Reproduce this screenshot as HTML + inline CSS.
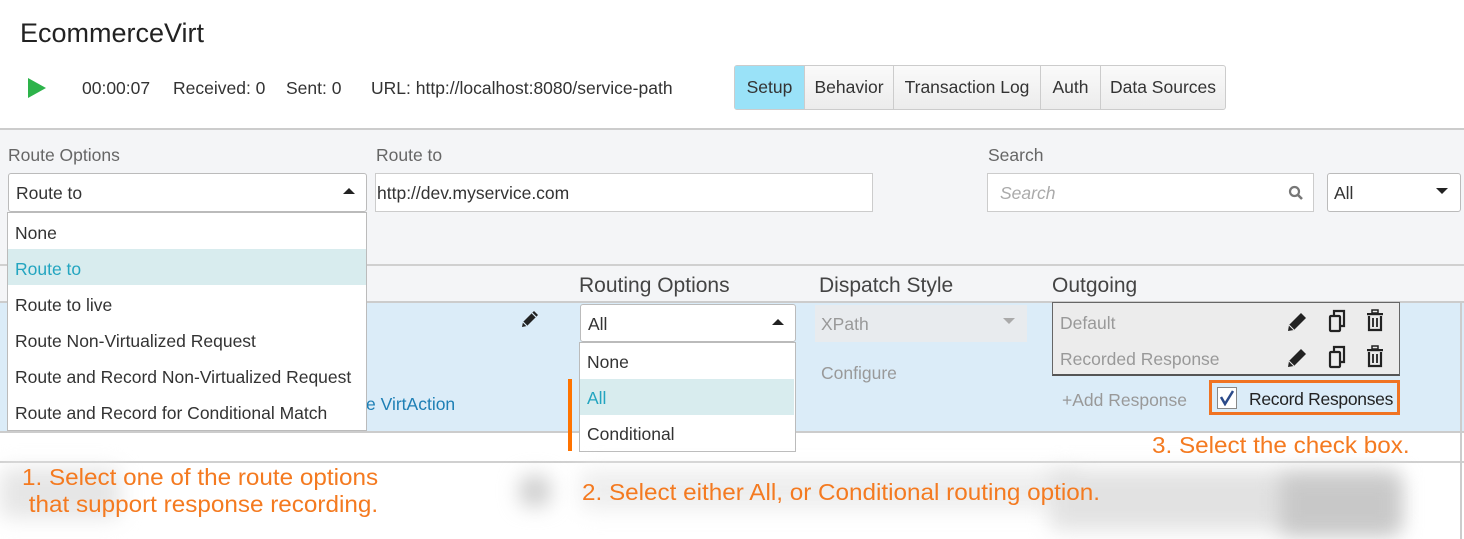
<!DOCTYPE html>
<html><head><meta charset="utf-8"><style>
*{box-sizing:border-box;margin:0;padding:0}
body{width:1464px;height:539px;overflow:hidden;background:#fff;font-family:"Liberation Sans",sans-serif;color:#333;position:relative}
.a{position:absolute;white-space:nowrap}
.f{font-size:17.5px}
.lbl{font-size:17.5px;color:#666}
.box{position:absolute;background:#fff;border:1px solid #ccc}
.or{color:#f47a20;font-size:23px;transform:scaleX(1.055);transform-origin:0 0}
.icon{position:absolute}
.blur{position:absolute;background:#ddd;filter:blur(10px);border-radius:8px}
</style></head><body>
<div class="a" style="left:20px;top:18px;font-size:27px;color:#222">EcommerceVirt</div>
<svg class="icon" style="left:27px;top:77px" width="20" height="22"><polygon points="1,1 19,11 1,21" fill="#2db34a"/></svg>
<div class="a f" style="left:82px;top:78px;color:#333">00:00:07</div>
<div class="a f" style="left:173px;top:78px">Received: 0</div>
<div class="a f" style="left:286px;top:78px">Sent: 0</div>
<div class="a f" style="left:371px;top:78px">URL: http://localhost:8080/service-path</div>
<div class="a" style="left:734px;top:65px;height:45px;border:1px solid #ccc;border-radius:3px;display:flex;background:linear-gradient(#fafafa,#ececec);font-size:17.5px">
<div style="width:70px;background:#9ae2f8;border-right:1px solid #ccc;line-height:43px;text-align:center">Setup</div>
<div style="width:89px;border-right:1px solid #ccc;line-height:43px;text-align:center">Behavior</div>
<div style="width:147px;border-right:1px solid #ccc;line-height:43px;text-align:center">Transaction Log</div>
<div style="width:60px;border-right:1px solid #ccc;line-height:43px;text-align:center">Auth</div>
<div style="width:124px;line-height:43px;text-align:center">Data Sources</div>
</div>
<div class="a" style="left:0;top:128px;width:1464px;height:138px;background:#f4f5f7;border-top:2px solid #ccc;border-bottom:2px solid #d0d0d0"></div>
<div class="a lbl" style="left:8px;top:145px">Route Options</div>
<div class="a lbl" style="left:376px;top:145px">Route to</div>
<div class="a lbl" style="left:988px;top:145px">Search</div>
<div class="box" style="left:8px;top:173px;width:359px;height:39px;border-radius:3px;border-color:#bbb"></div>
<div class="a f" style="left:16px;top:183px">Route to</div>
<svg class="icon" style="left:343px;top:187px" width="12" height="8"><polygon points="0,7 6,1 12,7" fill="#222"/></svg>
<div class="box" style="left:375px;top:173px;width:498px;height:39px"></div>
<div class="a f" style="left:377px;top:183px">http://dev.myservice.com</div>
<div class="box" style="left:987px;top:173px;width:327px;height:39px"></div>
<div class="a f" style="left:1000px;top:183px;color:#aaa;font-style:italic">Search</div>
<svg class="icon" style="left:1288px;top:185px" width="16" height="16"><circle cx="6.5" cy="6.5" r="4.5" stroke="#777" stroke-width="2.2" fill="none"/><line x1="10" y1="10" x2="14" y2="14" stroke="#777" stroke-width="2.6"/></svg>
<div class="box" style="left:1327px;top:173px;width:134px;height:39px;border-radius:3px;border-color:#bbb"></div>
<div class="a f" style="left:1334px;top:183px">All</div>
<svg class="icon" style="left:1436px;top:187px" width="12" height="8"><polygon points="0,1 12,1 6,7" fill="#222"/></svg>
<div class="a" style="left:0;top:266px;width:1464px;height:35px;background:#f4f5f7"></div>
<div class="a" style="left:579px;top:274px;font-size:21px;color:#444">Routing Options</div>
<div class="a" style="left:819px;top:274px;font-size:21px;color:#444">Dispatch Style</div>
<div class="a" style="left:1052px;top:274px;font-size:21px;color:#444">Outgoing</div>
<div class="a" style="left:0;top:301px;width:1464px;height:132px;background:#dbecf8;border-top:2px solid #ccc;border-bottom:2px solid #ccc"></div>
<div class="a" style="left:0;top:461px;width:1464px;height:2px;background:#d0d0d0"></div>
<div class="a" style="left:1460px;top:301px;width:2px;height:238px;background:#ccc"></div>
<div class="a f" style="left:366px;top:394px;color:#1d7fb5">e VirtAction</div>
<svg class="icon" style="left:519px;top:308px" width="22" height="22" viewBox="0 0 22 22"><path d="M3 19 L4 14 L15 3 L19 7 L8 18 Z" fill="#222"/><path d="M4 14 L8 18" stroke="#dbecf8" stroke-width="1.2"/><path d="M13 5 L17 9" stroke="#dbecf8" stroke-width="1.2"/></svg>
<div class="box" style="left:580px;top:304px;width:216px;height:38px;border-radius:3px;border-color:#bbb"></div>
<div class="a f" style="left:588px;top:314px">All</div>
<svg class="icon" style="left:772px;top:318px" width="12" height="8"><polygon points="0,7 6,1 12,7" fill="#222"/></svg>
<div class="box" style="left:579px;top:342px;width:217px;height:110px;border-color:#bbb"></div>
<div class="a f" style="left:587px;top:352px">None</div>
<div class="a" style="left:580px;top:379px;width:214px;height:36px;background:#d8ecee"></div>
<div class="a f" style="left:587px;top:388px;color:#23a5c0">All</div>
<div class="a f" style="left:587px;top:424px">Conditional</div>
<div class="a" style="left:568px;top:379px;width:4px;height:72px;background:#ff7300"></div>
<div class="a" style="left:815px;top:305px;width:212px;height:37px;background:#e8ebee"></div>
<div class="a f" style="left:821px;top:314px;color:#999">XPath</div>
<svg class="icon" style="left:1003px;top:318px" width="12" height="7"><polygon points="0,0 12,0 6,6" fill="#aaa"/></svg>
<div class="a f" style="left:821px;top:363px;color:#999">Configure</div>
<div class="a" style="left:1052px;top:302px;width:348px;height:74px;background:#ececec;border:1px solid #666;border-bottom:2px solid #555"></div>
<div class="a f" style="left:1060px;top:313px;color:#999">Default</div>
<div class="a f" style="left:1060px;top:349px;color:#999">Recorded Response</div>
<svg class="icon" style="left:1286px;top:309px" width="118" height="64" viewBox="0 0 118 64">
<g id="r"><path d="M2 22 L3 16 L15 4 L20 9 L8 21 Z" fill="#222"/><path d="M3 16 L8 21" stroke="#ececec"/>
<rect x="44" y="7" width="10" height="15" rx="1" fill="none" stroke="#222" stroke-width="2.2"/><path d="M48 7 V2 H58 V17 H54" fill="none" stroke="#222" stroke-width="2.2"/>
<rect x="81" y="4" width="16" height="2.2" fill="#222"/><rect x="86" y="1" width="6" height="3" fill="none" stroke="#222" stroke-width="1.5"/><path d="M83 7 V21 H95 V7" fill="none" stroke="#222" stroke-width="2.2"/><path d="M87 9 V18 M91 9 V18" stroke="#222" stroke-width="1.8"/></g>
<use href="#r" y="36"/>
</svg>
<div class="a f" style="left:1062px;top:390px;color:#999">+Add Response</div>
<div class="a" style="left:1209px;top:380px;width:191px;height:35px;border:3px solid #f07322"></div>
<div class="a" style="left:1217px;top:387px;width:20px;height:22px;background:#fff;border:1px solid #888"></div>
<svg class="icon" style="left:1219px;top:390px" width="16" height="16"><path d="M2 7 L6 14 L14 1" fill="none" stroke="#2b4a8a" stroke-width="2.5"/></svg>
<div class="a" style="left:1249px;top:389px;color:#222;font-size:17.5px;letter-spacing:-0.3px">Record Responses</div>
<div class="box" style="left:7px;top:212px;width:360px;height:219px;border-color:#bbb"></div>
<div class="a f" style="left:15px;top:223px">None</div>
<div class="a" style="left:8px;top:249px;width:358px;height:36px;background:#d8ecee"></div>
<div class="a f" style="left:15px;top:259px;color:#23a5c0">Route to</div>
<div class="a f" style="left:15px;top:295px">Route to live</div>
<div class="a f" style="left:15px;top:331px">Route Non-Virtualized Request</div>
<div class="a f" style="left:15px;top:367px">Route and Record Non-Virtualized Request</div>
<div class="a f" style="left:15px;top:403px">Route and Record for Conditional Match</div>
<div class="blur" style="left:0;top:468px;width:120px;height:50px;background:#e6e6e6"></div>
<div class="blur" style="left:520px;top:476px;width:30px;height:30px;background:#ccc"></div>
<div class="blur" style="left:580px;top:470px;width:500px;height:40px;background:#eee"></div>
<div class="blur" style="left:1050px;top:470px;width:350px;height:60px;background:#e2e2e2"></div>
<div class="blur" style="left:1280px;top:475px;width:120px;height:60px;background:#c8c8c8"></div>
<div class="a or" style="left:1152px;top:432px">3. Select the check box.</div>
<div class="a or" style="left:22px;top:464px;line-height:27px">1. Select one of the route options<br>&nbsp;that support response recording.</div>
<div class="a or" style="left:582px;top:479px">2. Select either All, or Conditional routing option.</div>
</body></html>
